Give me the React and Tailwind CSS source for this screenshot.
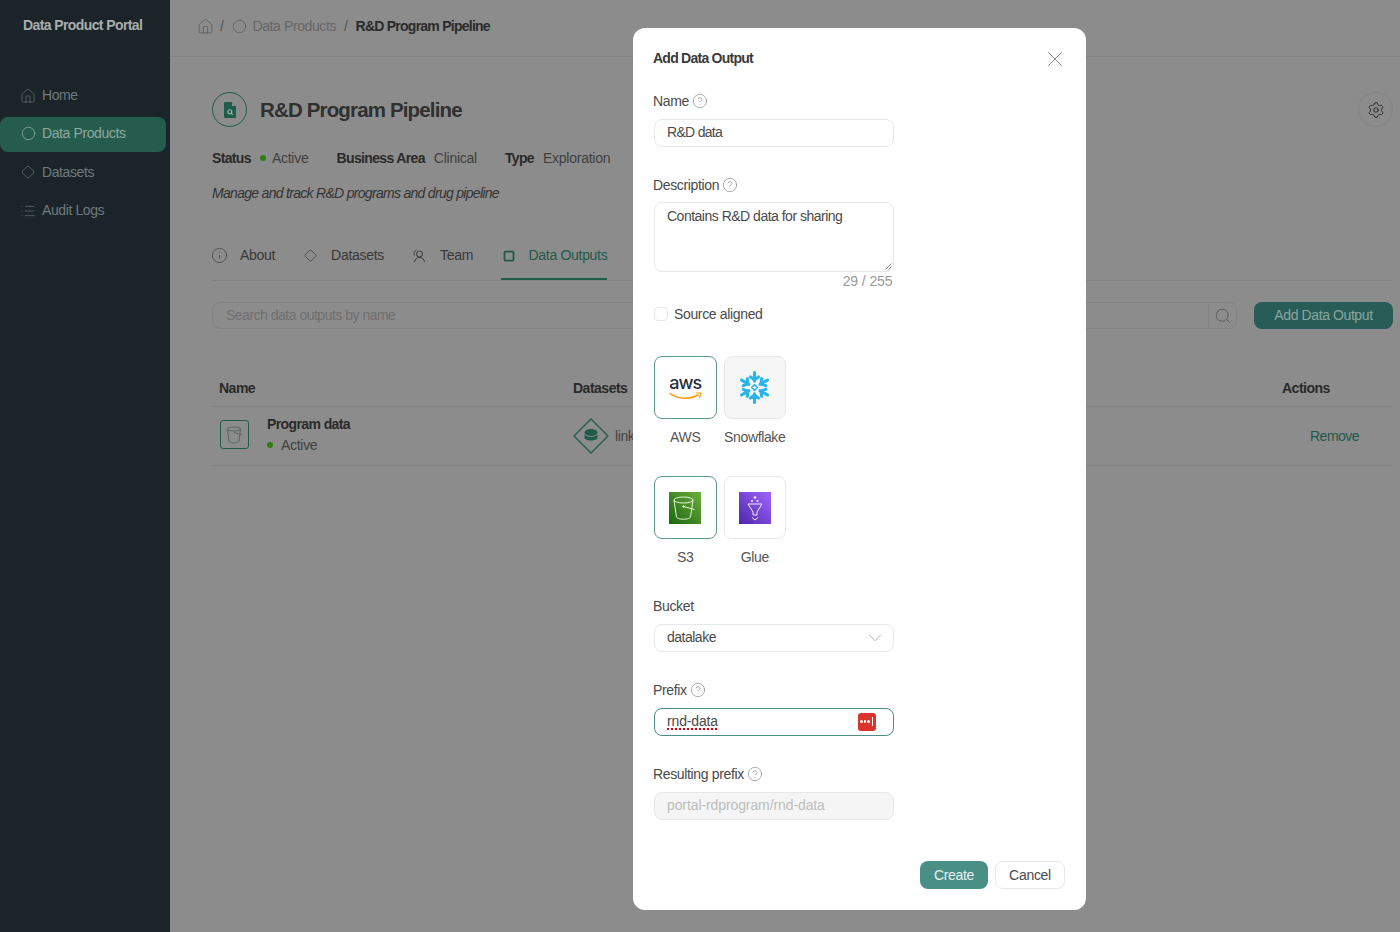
import React from "react";
import { Home, Circle, Diamond, List, Info, Square, Settings, Search, X, ChevronDown, CircleHelp } from "lucide-react";

function Help() {
  return <CircleHelp size={16} strokeWidth={1.1} className="text-[#8f8f8f]" />;
}

function NavItem({ icon, label, active }) {
  return (
    <div className={"flex h-[35px] w-[166px] items-center gap-[6px] rounded-[8px] pb-[2px] pl-[20px] text-[14px] tracking-[-0.4px] " + (active ? "bg-[#265c4c] text-[#8fa8a0]" : "text-[#6f7a7c]")}>
      {icon}
      <span>{label}</span>
    </div>
  );
}

function Tab({ icon, label, active }) {
  return (
    <div className={"flex h-[49px] items-center gap-[14px] border-b-2 pt-[2px] tracking-[-0.3px] " + (active ? "border-[#1f5c4a] text-[#1f5a48]" : "border-transparent text-[#383838]")}>
      {icon}
      <span>{label}</span>
    </div>
  );
}

function Meta({ label, children }) {
  return (
    <div className="flex items-center gap-[9px] tracking-[-0.25px]">
      <span className="font-bold tracking-[-0.65px] text-[#2a2a2a]">{label}</span>
      {children}
    </div>
  );
}

function FileIcon() {
  return (
    <svg width="14" height="16" viewBox="0 0 14 16">
      <path d="M2 0h7l4 4v10.500a1.500 1.500 0 0 1-1.500 1.500h-9.500A1.500 1.500 0 0 1 1 14.500V1.500A1.500 1.500 0 0 1 2 0z" fill="#1f5c4a" />
      <path d="M9 0v4h4z" fill="#8c8c8c" />
      <circle cx="6.800" cy="9.800" r="2" fill="none" stroke="#9fb5ad" strokeWidth="1.100" />
      <path d="M8.300 11.300l1.500 1.500" stroke="#9fb5ad" strokeWidth="1.100" />
    </svg>
  );
}

function TeamIcon() {
  return (
    <svg width="14" height="14" viewBox="0 0 14 14" fill="none" stroke="#383838" strokeWidth="1">
      <circle cx="7.500" cy="5" r="3" />
      <path d="M2.500 13c.5-3 2.500-4.500 5-4.500s4.500 1.500 5 4.500" />
      <path d="M4.500 1.200C3 1.600 2 3 2 4.500c0 .8.200 1.400.6 2" />
    </svg>
  );
}

function BucketOutline() {
  return (
    <svg width="20" height="20" viewBox="0 0 20 20" fill="none" stroke="#4f625c" strokeWidth="0.900">
      <ellipse cx="9" cy="4" rx="6.500" ry="2" />
      <path d="M2.500 4l1.500 12c.3 1.200 2.500 2 5 2s4.700-.8 5-2l1.500-12" />
      <path d="M9 7.500l8 2.500" />
    </svg>
  );
}

function DatasetIcon() {
  return (
    <svg width="36" height="36" viewBox="0 0 36 36">
      <path d="M18 1L35 18 18 35 1 18z" fill="none" stroke="#1f5c4a" strokeWidth="1.300" strokeLinejoin="round" />
      <ellipse cx="18" cy="14.500" rx="6.500" ry="3.500" fill="#1f5c4a" />
      <path d="M11.500 16v3.500c0 2 3 3 6.500 3s6.500-1 6.500-3V16c-1 2-3.500 3-6.500 3s-5.500-1-6.500-3z" fill="#1f5c4a" />
    </svg>
  );
}

function AwsLogo() {
  return (
    <div className="flex flex-col items-center">
      <span className="font-['Inter',sans-serif] text-[18px] font-medium leading-[16px] tracking-[-0.9px] text-[#252f3e]">aws</span>
      <svg width="33" height="9" viewBox="0 0 33 9" fill="none" className="mt-[1px]">
        <path d="M1 1.500c8 6 20 6 28 1.500" stroke="#f90" strokeWidth="1.500" strokeLinecap="round" />
        <path d="M27 1h5l-1.500 4.500" stroke="#f90" strokeWidth="1.200" strokeLinecap="round" strokeLinejoin="round" />
      </svg>
    </div>
  );
}

function SnowflakeLogo() {
  const arm = "M15.500 1.500v8M15.500 8.500l-3.800-3M15.500 8.500l3.800-3";
  return (
    <svg width="33" height="33" viewBox="0 0 31 31" fill="none" stroke="#29b5e8" strokeWidth="2.900" strokeLinecap="round" strokeLinejoin="round">
      {[0, 60, 120, 180, 240, 300].map((a) => (
        <path key={a} d={arm} transform={`rotate(${a} 15.500 15.500)`} />
      ))}
      <path d="M15.500 12.800l2.700 2.700-2.700 2.700-2.700-2.700z" strokeWidth="1.500" />
    </svg>
  );
}

function S3Logo() {
  return (
    <svg width="32" height="32" viewBox="0 0 32 32">
      <defs>
        <linearGradient id="s3g" x1="0" y1="1" x2="1" y2="0">
          <stop offset="0" stopColor="#1b660f" />
          <stop offset="1" stopColor="#6cae3e" />
        </linearGradient>
      </defs>
      <rect width="32" height="32" fill="url(#s3g)" />
      <g fill="none" stroke="#e6f4da" strokeWidth="1">
        <ellipse cx="14.500" cy="8" rx="9.500" ry="3" />
        <path d="M5 8l2.500 17c.3 1.300 3 2.200 7 2.200s6.700-.9 7-2.200L24 8" />
        <path d="M14.500 14.500l11 3" />
        <circle cx="14.500" cy="14.500" r="0.800" fill="#e6f4da" />
      </g>
    </svg>
  );
}

function GlueLogo() {
  return (
    <svg width="32" height="32" viewBox="0 0 32 32">
      <defs>
        <linearGradient id="glg" x1="0" y1="1" x2="1" y2="0">
          <stop offset="0" stopColor="#4d27a8" />
          <stop offset="1" stopColor="#a166ff" />
        </linearGradient>
      </defs>
      <rect width="32" height="32" fill="url(#glg)" />
      <g fill="none" stroke="#f2eaff" strokeWidth="1">
        <path d="M9 12h14l-5 8v3h-4v-3z" />
        <path d="M13 25.500l3 2.500 3-2.500" />
      </g>
      <g fill="#f2eaff">
        <circle cx="16" cy="5.500" r="1.300" />
        <circle cx="13" cy="9" r="1.100" />
        <circle cx="18.500" cy="9" r="1.100" />
      </g>
    </svg>
  );
}

function Tile({ logo, label, selected, tint }) {
  return (
    <div className="flex w-[62.500px] flex-col items-center">
      <div className={"flex h-[63px] w-[62.500px] items-center justify-center rounded-[8px] border " + (selected ? "border-[#5c9a90] " : "border-[#e8e8e8] ") + (tint ? "bg-[#f6f6f6]" : "bg-white")}>
        {logo}
      </div>
      <span className="mt-[8px] whitespace-nowrap text-[14px] leading-[20px] tracking-[-0.35px] text-[#555]">{label}</span>
    </div>
  );
}

function FieldLabel({ children, help = true }) {
  return (
    <div className="flex h-[20px] items-center gap-[3px] text-[14px] tracking-[-0.35px] text-[#4a4a4a]">
      <span>{children}</span>
      {help && <Help />}
    </div>
  );
}

function Box({ children, className = "" }) {
  return (
    <div className={"ml-px mt-[8px] flex h-[28px] w-[239.500px] items-center rounded-[8px] border px-[12px] pb-[1px] text-[14px] " + className}>
      {children}
    </div>
  );
}

function Modal() {
  return (
    <div className="absolute left-[633px] top-[28px] h-[882px] w-[453px] rounded-[12px] bg-white pl-[20px] pr-[21px] pt-[20px]">
      <div className="flex h-[20px] items-center justify-between">
        <span className="text-[14px] font-bold tracking-[-0.75px] text-[#3a3a3a]">Add Data Output</span>
        <X size={26} strokeWidth={0.8} className="-mr-[3px] mt-[1px] text-[#777]" />
      </div>
      <div className="mt-[23px]"><FieldLabel>Name</FieldLabel></div>
      <Box className="border-[#e8e8e8] tracking-[-0.7px] text-[#4a4a4a]">R&amp;D data</Box>

      <div className="mt-[28px]"><FieldLabel>Description</FieldLabel></div>
      <div className="relative ml-px mt-[7px] h-[70px] w-[239.500px] rounded-[8px] border border-[#e8e8e8] pl-[12px] pt-[3px] text-[14px] tracking-[-0.5px] text-[#4a4a4a]">
        Contains R&amp;D data for sharing
        <svg width="7" height="7" viewBox="0 0 7 7" className="absolute bottom-[1px] right-[1px]" stroke="#666" strokeWidth="0.800">
          <path d="M0.500 6.500L6.500 0.500M3.500 6.500L6.500 3.500" />
        </svg>
      </div>
      <div className="ml-px w-[239.500px] pr-px text-right text-[14px] leading-[18px] tracking-[-0.1px] text-[#999]">29 / 255</div>

      <div className="mt-[14px] flex h-[20px] items-center gap-[6px] pl-px text-[14px] tracking-[-0.35px] text-[#4a4a4a]">
        <span className="h-[14px] w-[14px] rounded-[4px] border border-[#e6e6e6]" />
        <span>Source aligned</span>
      </div>

      <div className="ml-px mt-[32px] flex gap-[7px]">
        <Tile selected logo={<AwsLogo />} label="AWS" />
        <Tile tint logo={<SnowflakeLogo />} label="Snowflake" />
      </div>
      <div className="ml-px mt-[29px] flex gap-[7px]">
        <Tile selected logo={<S3Logo />} label="S3" />
        <Tile logo={<GlueLogo />} label="Glue" />
      </div>

      <div className="mt-[29px]"><FieldLabel help={false}>Bucket</FieldLabel></div>
      <Box className="justify-between border-[#e8e8e8] tracking-[-0.5px] text-[#4a4a4a]">
        <span>datalake</span>
        <ChevronDown size={22} strokeWidth={0.8} className="-mr-[5px] text-[#999]" />
      </Box>

      <div className="mt-[28px]"><FieldLabel>Prefix</FieldLabel></div>
      <Box className="justify-between border-[#4a8f86] !pr-[17px] tracking-[-0.15px] text-[#4a4a4a]">
        <span className="underline decoration-red-600 decoration-dotted decoration-[1.5px] underline-offset-2">rnd-data</span>
        <span className="flex h-[18px] w-[18px] items-center justify-center gap-[1px] rounded-[3px] bg-[#d9352c]">
          <span className="h-[2.500px] w-[2.500px] rounded-full bg-white" />
          <span className="h-[2.500px] w-[2.500px] rounded-full bg-white" />
          <span className="h-[2.500px] w-[2.500px] rounded-full bg-white" />
          <span className="ml-px h-[9px] w-px bg-white" />
        </span>
      </Box>

      <div className="mt-[28px]"><FieldLabel>Resulting prefix</FieldLabel></div>
      <Box className="border-[#e8e8e8] bg-[#f5f5f5] tracking-[-0.1px] text-[#bdbdbd]">portal-rdprogram/rnd-data</Box>

      <div className="mt-[41px] flex justify-end gap-[7px]">
        <div className="flex h-[28px] w-[68px] items-center justify-center rounded-[8px] bg-[#4a8f86] text-[14px] tracking-[-0.3px] text-[#e6f2f0]">Create</div>
        <div className="flex h-[28px] w-[70px] items-center justify-center rounded-[8px] border border-[#e8e8e8] text-[14px] tracking-[-0.3px] text-[#4a4a4a]">Cancel</div>
      </div>
    </div>
  );
}

export default function App() {
  return (
    <div className="relative flex h-[932px] w-[1400px] overflow-hidden bg-[#8c8c8c] font-['Liberation_Sans',sans-serif] text-[14px] tracking-[-0.4px]">
      <aside className="h-full w-[170px] shrink-0 bg-[#1b2428]">
        <div className="pl-[23px] pt-[16px] text-[14px] font-bold leading-[18px] tracking-[-0.6px] text-[#a8adad]">Data Product Portal</div>
        <nav className="mt-[45px] flex flex-col gap-[3.400px]">
          <NavItem icon={<Home size={16} strokeWidth={1} />} label="Home" />
          <NavItem active icon={<Circle size={15} strokeWidth={1.300} className="mx-[0.500px]" />} label="Data Products" />
          <NavItem icon={<Diamond size={14} strokeWidth={1.200} className="mx-px" />} label="Datasets" />
          <NavItem icon={<List size={16} strokeWidth={1} />} label="Audit Logs" />
        </nav>
      </aside>

      <main className="min-w-0 flex-1">
        <div className="flex h-[57px] items-center gap-[6px] border-b border-[#828282] pb-[4px] pl-[27px] text-[#666]">
          <Home size={17} strokeWidth={1} className="text-[#555]" />
          <span className="text-[#555]">/</span>
          <Circle size={15} strokeWidth={1.100} className="ml-[2px] text-[#555]" />
          <span>Data Products</span>
          <span className="ml-[2px] text-[#555]">/</span>
          <span className="ml-[2px] font-bold tracking-[-0.75px] text-[#2a2a2a]">R&amp;D Program Pipeline</span>
        </div>

        <div className="pl-[42px] pr-[7px]">
          <div className="mt-[35px] flex items-center justify-between">
            <div className="flex items-center gap-[13px]">
              <span className="flex h-[35px] w-[35px] items-center justify-center rounded-full border-[1.500px] border-[#1f5c4a]"><FileIcon /></span>
              <h1 className="mt-[1px] text-[20.500px] font-bold tracking-[-0.85px] text-[#303030]">R&amp;D Program Pipeline</h1>
            </div>
            <span className="flex h-[35px] w-[35px] items-center justify-center rounded-full border border-[#848484]">
              <Settings size={18} strokeWidth={1.300} className="text-[#262626]" />
            </span>
          </div>

          <div className="mt-[21px] flex h-[20px] items-center gap-[28px] text-[#3f3f3f]">
            <Meta label="Status">
              <span className="h-[6px] w-[6px] rounded-full bg-[#2f7d17]" />
              <span className="-ml-[3px]">Active</span>
            </Meta>
            <Meta label="Business Area"><span>Clinical</span></Meta>
            <Meta label="Type"><span>Exploration</span></Meta>
          </div>

          <p className="mt-[15px] h-[20px] italic tracking-[-0.7px] text-[#333]">Manage and track R&amp;D programs and drug pipeline</p>

          <div className="mt-[28px] flex gap-[28px] border-b border-[#828282]">
            <Tab icon={<Info size={17} strokeWidth={1} className="-mx-[1.500px]" />} label="About" />
            <Tab icon={<Diamond size={13} strokeWidth={1.300} className="mx-[0.500px]" />} label="Datasets" />
            <Tab icon={<TeamIcon />} label="Team" />
            <Tab active icon={<Square size={12} strokeWidth={3.500} className="ml-[1.500px]" />} label="Data Outputs" />
          </div>

          <div className="mt-[21px] flex items-center justify-between">
            <div className="flex h-[27px] w-[1025px] items-center rounded-[8px] border border-[#828282]">
              <span className="flex-1 pl-[13px] tracking-[-0.5px] text-[#6f6f6f]">Search data outputs by name</span>
              <span className="flex h-full w-[28px] items-center justify-center border-l border-[#828282]">
                <Search size={18} strokeWidth={1.100} className="text-[#555]" />
              </span>
            </div>
            <div className="flex h-[27px] w-[139px] items-center justify-center rounded-[8px] bg-[#285c56] text-[#88a5a0]">Add Data Output</div>
          </div>

          <div className="mt-[42px] grid grid-cols-[354px_1fr_120px]">
            <div className="flex h-[36px] items-center border-b border-[#848484] pl-[7px] font-bold tracking-[-0.5px] text-[#2a2a2a]">Name</div>
            <div className="flex h-[36px] items-center border-b border-[#848484] pl-[7px] font-bold tracking-[-0.5px] text-[#2a2a2a]">Datasets</div>
            <div className="flex h-[36px] items-center border-b border-[#848484] pl-[9px] font-bold tracking-[-0.5px] text-[#2a2a2a]">Actions</div>

            <div className="flex h-[59px] items-center gap-[18px] border-b border-[#848484] pb-[3px] pl-[8px]">
              <span className="flex h-[29px] w-[29px] items-center justify-center rounded-[3px] border-[1.200px] border-[#1f5c4a]"><BucketOutline /></span>
              <div className="flex flex-col gap-[1px] leading-[20px]">
                <span className="font-bold tracking-[-0.6px] text-[#2a2a2a]">Program data</span>
                <span className="flex items-center gap-[8px] tracking-[-0.3px] text-[#3f3f3f]">
                  <span className="h-[6px] w-[6px] rounded-full bg-[#2f7d17]" />
                  Active
                </span>
              </div>
            </div>
            <div className="flex h-[59px] items-center gap-[6px] border-b border-[#848484] pl-[7px] text-[#444]">
              <DatasetIcon />
              <span>link</span>
            </div>
            <div className="flex h-[59px] items-center border-b border-[#848484] pl-[37px] tracking-[-0.5px] text-[#1f5a48]">Remove</div>
          </div>
        </div>
      </main>

      <Modal />
    </div>
  );
}
